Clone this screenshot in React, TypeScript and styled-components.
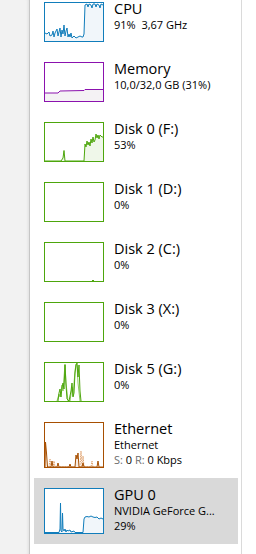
import React from 'react';
import styled, { createGlobalStyle } from 'styled-components';

type Pt = [number, number];

interface Series {
  points: Pt[];
  stroke: string;
  fill?: string;
  dashed?: boolean;
}

interface Device {
  title: string;
  lines: React.ReactNode[];
  border: string;
  series: Series[];
  tall?: boolean;
  selected?: boolean;
}

const Label = styled.span`
  color: #6d6d6d;
`;

const BLUE = '#117dbb';
const BLUE_FILL = '#f1f6fa';
const GREEN = '#4da60c';
const GREEN_FILL = '#eff7e9';
const PURPLE = '#8b12ae';
const BROWN = '#a74f01';

const devices: Device[] = [
  {
    title: 'CPU',
    lines: ['91%\u00a0 3,67 GHz'],
    border: BLUE,
    series: [
      {
        stroke: BLUE,
        fill: BLUE_FILL,
        points: [
          [0, 30], [2, 31], [4, 29], [5, 33], [7, 32], [8, 28], [9, 34], [10, 30], [12, 26],
          [13, 33], [14, 29], [15, 25], [16, 34], [17, 27], [18, 31], [19, 22], [20, 33],
          [21, 28], [22, 25], [23, 34], [24, 31], [25, 34], [26, 30], [27, 35], [29, 33],
          [31, 35], [33, 34], [35, 33], [37, 34], [38, 34], [39, 31], [40, 2], [42, 1],
          [43, 4], [44, 1], [46, 2], [47, 5], [48, 1], [50, 1], [51, 4], [52, 1], [54, 2],
          [55, 5], [56, 1], [58, 2],
        ],
      },
    ],
  },
  {
    title: 'Memory',
    lines: ['10,0/32,0 GB (31%)'],
    border: PURPLE,
    series: [
      {
        stroke: PURPLE,
        fill: '#f4f2f4',
        points: [[0, 30], [13, 30], [15, 28], [39, 27.5], [40, 26.5], [58, 26.5]],
      },
    ],
  },
  {
    title: 'Disk 0 (F:)',
    lines: ['53%'],
    border: GREEN,
    series: [
      {
        stroke: GREEN,
        fill: GREEN_FILL,
        points: [
          [0, 38], [16, 38], [18, 35], [19, 27.5], [20, 38], [39, 38], [40, 21], [41, 24],
          [42, 18], [43, 22], [44, 19], [45, 23], [46, 16], [47, 20], [48, 14], [49, 19],
          [50, 17], [51, 11], [52, 15], [53, 12], [54, 16], [55, 12], [56, 13], [57, 14], [58, 14],
        ],
      },
    ],
  },
  { title: 'Disk 1 (D:)', lines: ['0%'], border: GREEN, series: [] },
  {
    title: 'Disk 2 (C:)',
    lines: ['0%'],
    border: GREEN,
    series: [{ stroke: GREEN, points: [[47, 38], [48, 37], [49, 38]] }],
  },
  { title: 'Disk 3 (X:)', lines: ['0%'], border: GREEN, series: [] },
  {
    title: 'Disk 5 (G:)',
    lines: ['0%'],
    border: GREEN,
    series: [
      {
        stroke: '#8fca5f',
        points: [
          [12, 38], [14, 31], [15, 34], [17, 22], [18, 28], [20, 1], [21, 20], [23, 38],
          [25, 38], [27, 24], [28, 33], [30, 8], [31, 1], [32, 2], [33, 20], [35, 38],
        ],
      },
      {
        stroke: GREEN,
        points: [
          [13, 38], [14, 30], [15, 26], [16, 34], [17, 24], [18, 20], [19, 26], [20, 2],
          [21, 22], [22, 36], [24, 38], [26, 28], [27, 20], [28, 34], [29, 30], [30, 10],
          [31, 2], [32, 0], [33, 14], [34, 2], [35, 28], [36, 38],
        ],
      },
    ],
  },
  {
    title: 'Ethernet',
    lines: [
      'Ethernet',
      <>
        <Label>S:</Label> 0 <Label>R:</Label> 0 Kbps
      </>,
    ],
    border: BROWN,
    tall: true,
    series: [
      {
        stroke: '#e0a06a',
        dashed: true,
        points: [
          [4, 44], [5, 36], [6, 44], [8, 44], [9, 38], [10, 44], [35, 44], [36, 28], [37, 44],
          [37.5, 44], [38, 33], [39, 44], [46, 44], [47, 38], [48, 44],
        ],
      },
      {
        stroke: BROWN,
        fill: '#f6ece3',
        points: [
          [0, 44], [0.5, 19], [1.5, 30], [2.5, 44], [6, 44], [7, 38], [8, 44], [12, 44],
          [13, 40], [14, 44], [24, 44], [25, 41], [26, 44], [30, 44], [31, 32], [32, 36],
          [33, 30], [34, 44], [37, 44], [38, 40], [39, 44], [52, 44], [53, 38], [54, 44], [58, 44],
        ],
      },
    ],
  },
  {
    title: 'GPU 0',
    lines: ['NVIDIA GeForce G...', '29%'],
    border: BLUE,
    tall: true,
    selected: true,
    series: [
      {
        stroke: BLUE,
        fill: BLUE_FILL,
        points: [
          [0, 43.5], [14, 43.5], [15, 40], [15.5, 14], [16, 42], [17, 43], [17.5, 24], [18, 40],
          [19, 42], [20, 40], [21, 43], [22, 41], [23, 42], [25, 41], [26, 43], [29, 42],
          [30, 43.5], [38, 43.5], [39, 30], [40, 28], [42, 27.5], [44, 28], [46, 27], [48, 28],
          [50, 28.5], [52, 28], [54, 30], [56, 29], [58, 30],
        ],
      },
    ],
  },
];

const MiniGraph: React.FC<{ series: Series[]; tall?: boolean }> = ({ series, tall }) => {
  const h = tall ? 44 : 38;
  return (
    <svg width="58" height={h} viewBox={`0 0 58 ${h}`} preserveAspectRatio="none">
      {series.map((s, i) => {
        const pts = s.points.map(([x, y]) => `${x},${y}`).join(' ');
        const first = s.points[0];
        const last = s.points[s.points.length - 1];
        return (
          <g key={i}>
            {s.fill && (
              <polygon points={`${first[0]},${h} ${pts} ${last[0]},${h}`} fill={s.fill} />
            )}
            <polyline
              points={pts}
              fill="none"
              stroke={s.stroke}
              strokeWidth={1}
              strokeDasharray={s.dashed ? '1.5 1' : undefined}
              strokeLinejoin="round"
            />
          </g>
        );
      })}
    </svg>
  );
};

const App: React.FC = () => {
  return (
    <>
      <GlobalStyle />
      <Window>
        <SideStrip />
        <Content>
          <List>
            {devices.map((d) => (
              <Row key={d.title} $selected={d.selected}>
                <Graph $color={d.border} $tall={d.tall}>
                  <MiniGraph series={d.series} tall={d.tall} />
                </Graph>
                <Info>
                  <Title>{d.title}</Title>
                  {d.lines.map((l, i) => (
                    <Sub key={i}>{l}</Sub>
                  ))}
                </Info>
              </Row>
            ))}
          </List>
          <Splitter />
        </Content>
      </Window>
    </>
  );
};

const GlobalStyle = createGlobalStyle`
  body {
    margin: 0;
    background: #ffffff;
    font-family: "Open Sans", "Noto Sans", "Liberation Sans", sans-serif;
    color: #000;
  }
`;

const Window = styled.div`
  display: flex;
  width: 256px;
  height: 554px;
  overflow: hidden;
`;

const SideStrip = styled.div`
  width: 29px;
  flex-shrink: 0;
  background: #f2f2f2;
  border-right: 1px solid #c6c6c6;
  box-shadow: inset -3px 0 3px -2px rgba(0, 0, 0, 0.08);
`;

const Content = styled.div`
  flex: 1;
  display: flex;
  padding-left: 4px;
  background: #fff;
`;

const List = styled.div`
  width: 204px;
  display: flex;
  flex-direction: column;
  margin-top: -8px;
`;

const Splitter = styled.div`
  width: 1px;
  margin-left: 3px;
  background: #dadada;
`;

const Row = styled.div<{ $selected?: boolean }>`
  display: flex;
  align-items: flex-start;
  gap: 10px;
  padding: 10px;
  background: ${(p) => (p.$selected ? '#d9d9d9' : 'transparent')};
`;

const Graph = styled.div<{ $color: string; $tall?: boolean }>`
  width: 60px;
  height: ${(p) => (p.$tall ? 46 : 40)}px;
  flex-shrink: 0;
  box-sizing: border-box;
  border: 1px solid ${(p) => p.$color};
  background: #fff;

  svg {
    display: block;
  }
`;

const Info = styled.div`
  display: flex;
  flex-direction: column;
  min-width: 0;
  margin-top: -1px;
`;

const Title = styled.div`
  font-size: 14.5px;
  line-height: 16px;
  white-space: nowrap;
`;

const Sub = styled.div`
  font-size: 11px;
  line-height: 15px;
  white-space: nowrap;
`;

export default App;
